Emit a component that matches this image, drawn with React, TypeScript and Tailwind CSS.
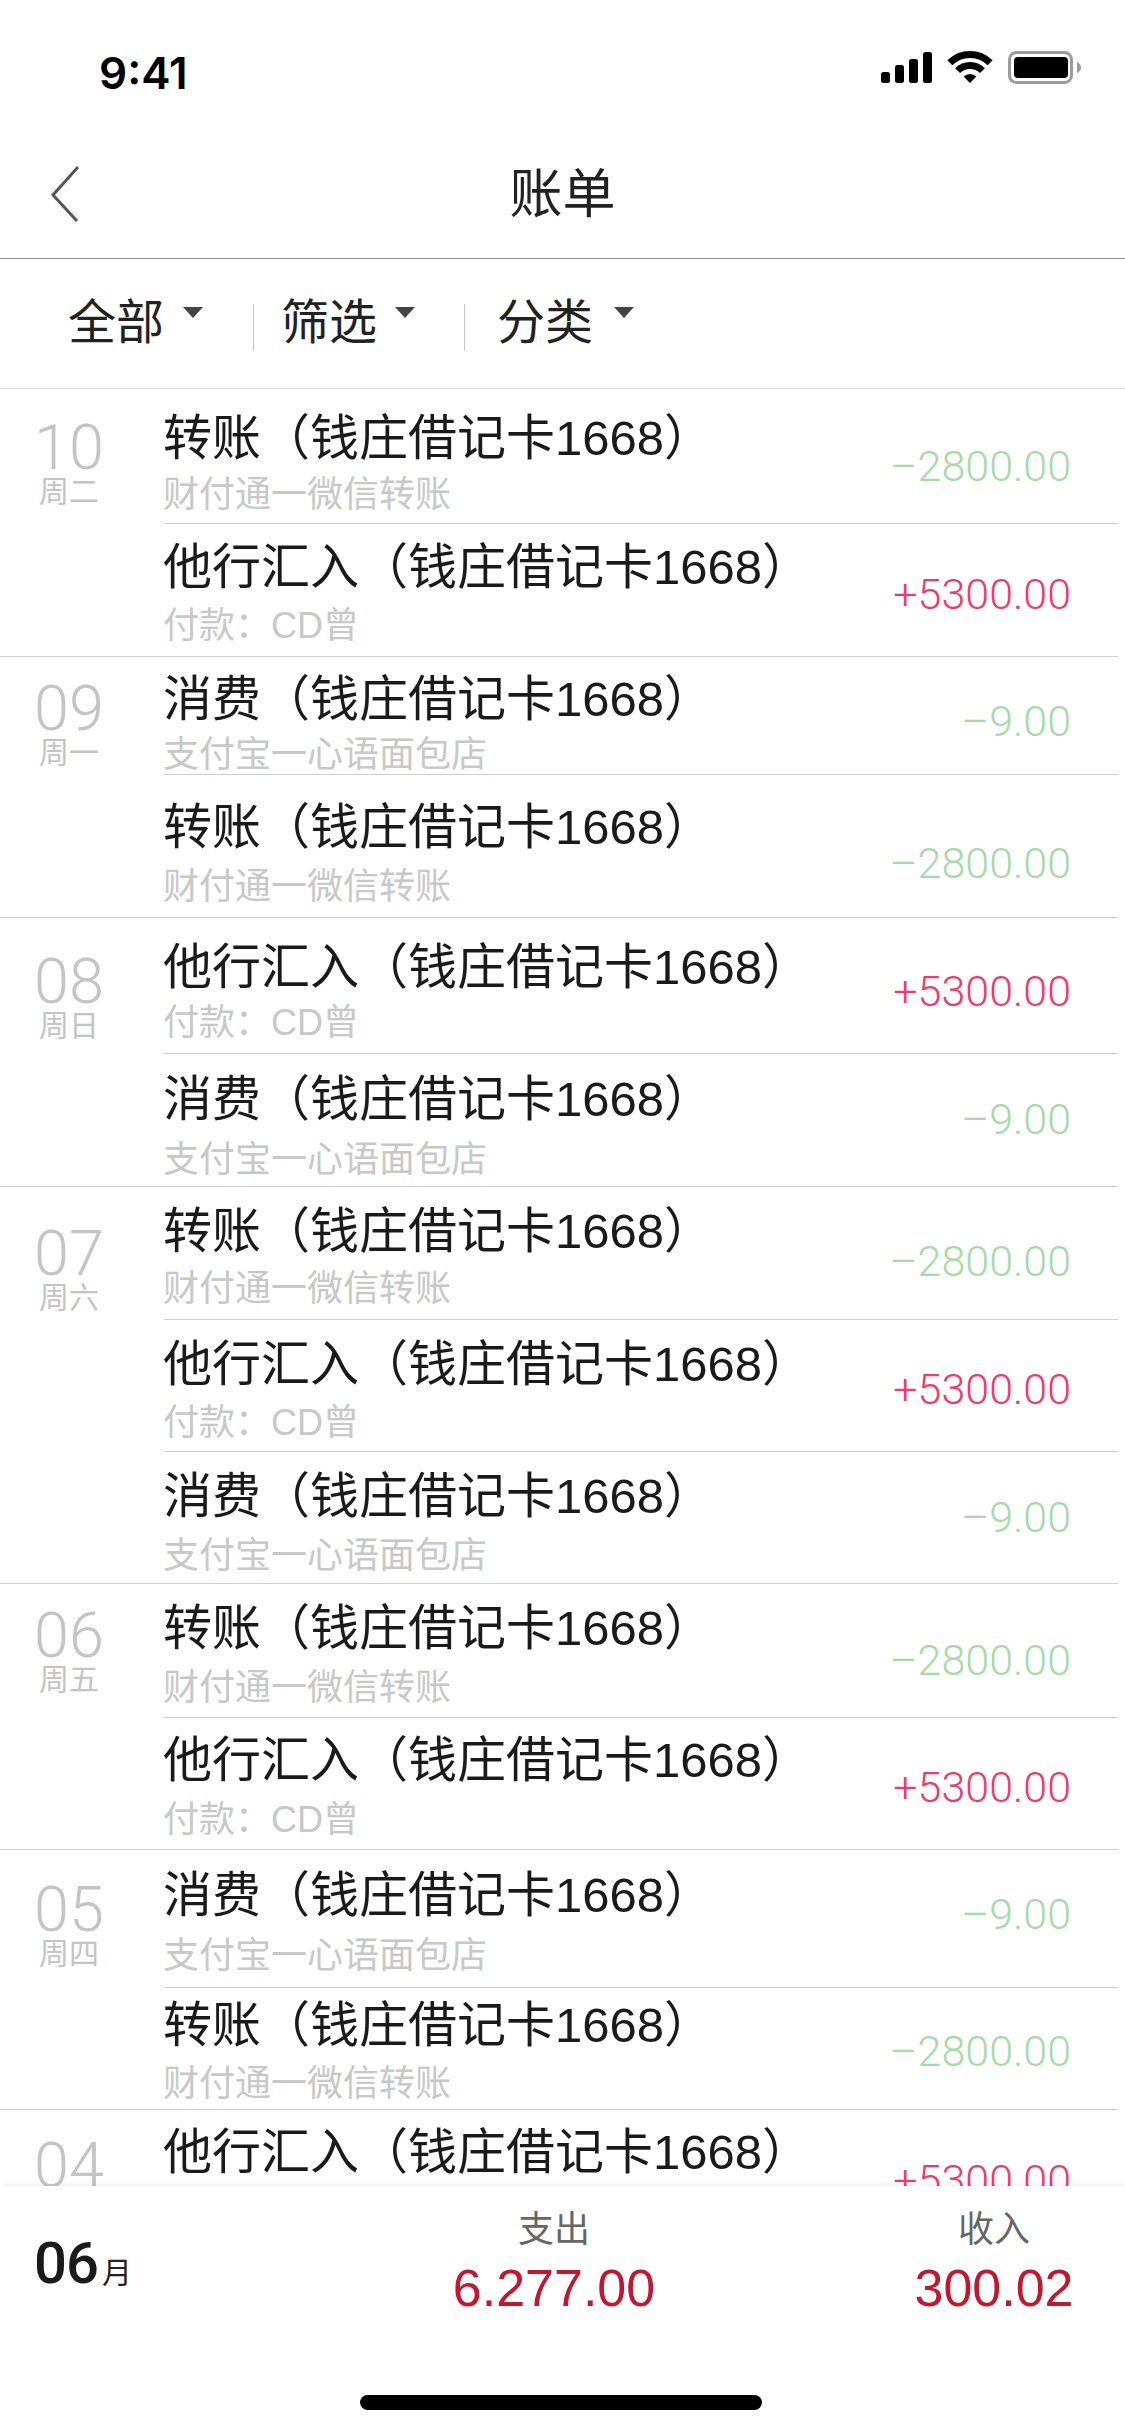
import React from 'react';

type Kind = 'transfer' | 'income' | 'spend';

type Row = {
  kind: Kind;
  box: string; // row height
  titleBox: string; // offset of the title from the row top
  subBox: string; // gap between title and sub line
  amountBox: string; // offset of the amount from the row top
};

type Day = {
  num: string;
  week: string;
  dateBox: string;
  rows: Row[];
};

const kinds: Record<Kind, { title: string; sub: string; amount: string; color: string }> = {
  transfer: { title: '转账（钱庄借记卡1668）', sub: '财付通一微信转账', amount: '–2800.00', color: 'text-[#a6dba6]' },
  income: { title: '他行汇入（钱庄借记卡1668）', sub: '付款：CD曾', amount: '+5300.00', color: 'text-[#f5386b]' },
  spend: { title: '消费（钱庄借记卡1668）', sub: '支付宝一心语面包店', amount: '–9.00', color: 'text-[#a6dba6]' },
};

const days: Day[] = [
  {
    num: '10',
    week: '周二',
    dateBox: 'pt-[29px]',
    rows: [
      { kind: 'transfer', box: 'h-[135px] border-b', titleBox: 'pt-[21px]', subBox: 'mt-[7px]', amountBox: 'pt-[52px]' },
      { kind: 'income', box: 'h-[132px]', titleBox: 'pt-[15px]', subBox: 'mt-[9px]', amountBox: 'pt-[45px]' },
    ],
  },
  {
    num: '09',
    week: '周一',
    dateBox: 'pt-[22px]',
    rows: [
      { kind: 'spend', box: 'h-[118px] border-b', titleBox: 'pt-[14px]', subBox: 'mt-[6px]', amountBox: 'pt-[39px]' },
      { kind: 'transfer', box: 'h-[142px]', titleBox: 'pt-[24px]', subBox: 'mt-[10px]', amountBox: 'pt-[63px]' },
    ],
  },
  {
    num: '08',
    week: '周日',
    dateBox: 'pt-[34px]',
    rows: [
      { kind: 'income', box: 'h-[136px] border-b', titleBox: 'pt-[21px]', subBox: 'mt-[6px]', amountBox: 'pt-[48px]' },
      { kind: 'spend', box: 'h-[132px]', titleBox: 'pt-[17px]', subBox: 'mt-[11px]', amountBox: 'pt-[40px]' },
    ],
  },
  {
    num: '07',
    week: '周六',
    dateBox: 'pt-[37px]',
    rows: [
      { kind: 'transfer', box: 'h-[133px] border-b', titleBox: 'pt-[16px]', subBox: 'mt-[8px]', amountBox: 'pt-[49px]' },
      { kind: 'income', box: 'h-[132px] border-b', titleBox: 'pt-[16px]', subBox: 'mt-[9px]', amountBox: 'pt-[44px]' },
      { kind: 'spend', box: 'h-[131px]', titleBox: 'pt-[16px]', subBox: 'mt-[10px]', amountBox: 'pt-[40px]' },
    ],
  },
  {
    num: '06',
    week: '周五',
    dateBox: 'pt-[22px]',
    rows: [
      { kind: 'transfer', box: 'h-[134px] border-b', titleBox: 'pt-[16px]', subBox: 'mt-[10px]', amountBox: 'pt-[51px]' },
      { kind: 'income', box: 'h-[131px]', titleBox: 'pt-[14px]', subBox: 'mt-[10px]', amountBox: 'pt-[44px]' },
    ],
  },
  {
    num: '05',
    week: '周四',
    dateBox: 'pt-[30px]',
    rows: [
      { kind: 'spend', box: 'h-[138px] border-b', titleBox: 'pt-[17px]', subBox: 'mt-[11px]', amountBox: 'pt-[39px]' },
      { kind: 'transfer', box: 'h-[121px]', titleBox: 'pt-[9px]', subBox: 'mt-[9px]', amountBox: 'pt-[38px]' },
    ],
  },
  {
    num: '04',
    week: '周三',
    dateBox: 'pt-[26px]',
    rows: [{ kind: 'income', box: 'h-[132px]', titleBox: 'pt-[14px]', subBox: 'mt-[9px]', amountBox: 'pt-[45px]' }],
  },
];

const cjk = "font-['Liberation_Sans','Noto_Sans_CJK_SC',sans-serif]";
const thin = "font-['Roboto','Noto_Sans_CJK_SC',sans-serif]";

const StatusIcons = () => (
  <div className="flex items-start">
    <svg width="51" height="31" viewBox="0 0 51 31" className="mt-[1px]" fill="#000">
      <rect x="0" y="20" width="9" height="11" rx="2.5" />
      <rect x="14" y="13" width="9" height="18" rx="2.5" />
      <rect x="28" y="7" width="9" height="24" rx="2.5" />
      <rect x="42" y="0" width="9" height="31" rx="2.5" />
    </svg>
    <svg width="46" height="32" viewBox="0 0 46 32" className="ml-[15px]">
      <path d="M2.85 11.85 A28.5 28.5 0 0 1 43.15 11.85" fill="none" stroke="#000" strokeWidth="7" />
      <path d="M10.6 19.6 A17.5 17.5 0 0 1 35.4 19.6" fill="none" stroke="#000" strokeWidth="7" />
      <path d="M23 32 L16.6 25.6 A9 9 0 0 1 29.4 25.6 Z" fill="#000" />
    </svg>
    <svg width="73" height="33" viewBox="0 0 73 33" className="ml-[15px]">
      <rect x="1.5" y="1.5" width="62" height="30" rx="7" fill="none" stroke="#9b9b9b" strokeWidth="3" />
      <rect x="6" y="6" width="54" height="21" rx="4" fill="#000" />
      <path d="M69 11 C71.5 12 73 14 73 16.5 C73 19 71.5 21 69 22 Z" fill="#9b9b9b" />
    </svg>
  </div>
);

const FilterItem = ({ label, box, caret }: { label: string; box: string; caret: string }) => (
  <div className={`flex items-start ${box}`}>
    <span className="text-[48px] leading-[56px] text-[#222]">{label}</span>
    <span className={`mt-[12px] h-0 w-0 border-x-[10px] border-t-[11px] border-x-transparent border-t-[#444] ${caret}`} />
  </div>
);

const ListRow = ({ row }: { row: Row }) => {
  const item = kinds[row.kind];
  return (
    <div className={`flex justify-between border-[#cfcfcf] pr-[47px] ${row.box}`}>
      <div className={`-ml-[1px] ${row.titleBox}`}>
        <p className={`whitespace-nowrap text-[49px] leading-[56px] text-[#1a1a1a] ${cjk}`}>{item.title}</p>
        <p className={`whitespace-nowrap text-[36px] leading-[44px] text-[#c8c8c8] ${cjk} ${row.subBox}`}>{item.sub}</p>
      </div>
      <div className={row.amountBox}>
        <span className={`block text-[43px] font-light leading-[50px] ${thin} ${item.color}`}>{item.amount}</span>
      </div>
    </div>
  );
};

const DayGroup = ({ day }: { day: Day }) => (
  <section className="flex w-[1118px] border-b border-[#cfcfcf]">
    <div className={`w-[138px] shrink-0 text-center text-[#c4c4c4] ${day.dateBox}`}>
      <p className={`text-[63px] font-light leading-[60px] ${thin}`}>{day.num}</p>
      <p className={`text-[30px] leading-[28px] ${cjk}`}>{day.week}</p>
    </div>
    <div className="ml-[26px] flex-1">
      {day.rows.map((row, index) => (
        <ListRow key={index} row={row} />
      ))}
    </div>
  </section>
);

export default function App() {
  return (
    <div className={`flex h-[2436px] w-[1125px] flex-col overflow-hidden bg-white ${cjk}`}>
      <div className="flex h-[112px] shrink-0 justify-between pl-[99px] pr-[44px] pt-[51px]">
        <span className="font-['Inter',sans-serif] text-[44px] font-semibold leading-[44px] text-black">9:41</span>
        <StatusIcons />
      </div>

      <header className="relative flex h-[147px] shrink-0 items-center justify-center border-b border-[#8c8c8c] pt-[20px]">
        <svg width="30" height="56" viewBox="0 0 30 56" className="absolute left-[50px] top-[54px]" fill="none" stroke="#555" strokeWidth="3">
          <path d="M28 1 L3 29 L27 55" />
        </svg>
        <h1 className="text-[53px] font-normal leading-[60px] text-[#222]">账单</h1>
      </header>

      <div className="flex h-[130px] shrink-0 items-start border-b border-[#d8d8d8] pl-[68px] pt-[36px]">
        <FilterItem label="全部" box="w-[185px]" caret="ml-[19px]" />
        <span className="mt-[9px] h-[47px] w-px bg-[#c8c8c8]" />
        <FilterItem label="筛选" box="ml-[27px] w-[183px]" caret="ml-[18px]" />
        <span className="mt-[9px] h-[47px] w-px bg-[#c8c8c8]" />
        <FilterItem label="分类" box="ml-[32px]" caret="ml-[21px]" />
      </div>

      <main className="min-h-0 flex-1 overflow-hidden">
        {days.map((day) => (
          <DayGroup key={day.num} day={day} />
        ))}
      </main>

      <footer className="relative h-[250px] shrink-0 bg-white shadow-[0_-2px_6px_rgba(0,0,0,0.06)]">
        <div className="flex">
          <div className="flex w-[404px] items-baseline pl-[34px] pt-[45px]">
            <span className={`text-[58px] font-medium leading-[64px] tracking-[-1px] text-[#1a1a1a] ${thin}`}>06</span>
            <span className="ml-[4px] text-[30px] text-[#222]">月</span>
          </div>
          <div className="w-[300px] pt-[22px] text-center">
            <p className="text-[36px] leading-[44px] text-[#666]">支出</p>
            <p className="mt-[6px] text-[52px] leading-[60px] text-[#c4162f]">6.277.00</p>
          </div>
          <div className="ml-[160px] w-[260px] pt-[22px] text-center">
            <p className="text-[36px] leading-[44px] text-[#666]">收入</p>
            <p className="mt-[6px] text-[52px] leading-[60px] text-[#c4162f]">300.02</p>
          </div>
        </div>
        <div className="absolute bottom-[26px] left-[360px] h-[15px] w-[402px] rounded-full bg-black" />
      </footer>
    </div>
  );
}
